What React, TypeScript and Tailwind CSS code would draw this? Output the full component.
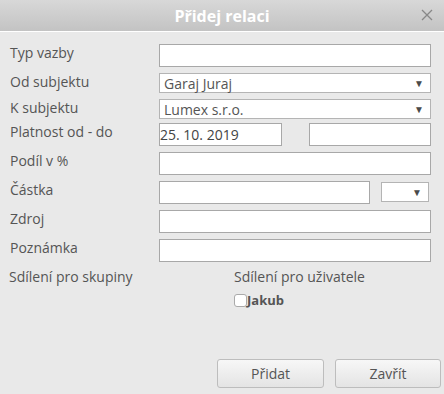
import React from 'react';

const Arrow: React.FC = () => (
    <span className="absolute right-[6px] top-1/2 -translate-y-1/2 text-[10px] leading-none text-[#4a4a4a]">▼</span>
);

const TextInput: React.FC<{ className?: string; value?: string }> = ({ className = '', value = '' }) => (
    <input
        type="text"
        defaultValue={value}
        className={`h-[23px] bg-white border border-[#a8a8a8] outline-none px-0 text-[14px] text-[#444] ${className}`}
    />
);

const Select: React.FC<{ value?: string; className?: string }> = ({ value = '', className = '' }) => (
    <div className={`relative h-[20px] bg-white border border-[#b4b4b4] flex items-center pl-[4px] text-[14px] text-[#555] ${className}`}>
        <span>{value}</span>
        <Arrow />
    </div>
);

const Row: React.FC<{ label: string; h: string; children: React.ReactNode }> = ({ label, h, children }) => (
    <div className={`flex items-start ${h}`}>
        <div className="w-[159px] pl-[10px] leading-[18px]">{label}</div>
        <div className="flex-1 flex items-start">{children}</div>
    </div>
);

const App: React.FC = () => {
    return (
        <div className="w-[444px] h-[394px] bg-[#e9e9e9] flex flex-col text-[14px] text-[#555]" style={{ fontFamily: '"Open Sans", sans-serif' }}>
            {/* header */}
            <div className="relative h-[32px] bg-gradient-to-b from-[#d8d8d8] to-[#c3c3c3] border-b border-white flex items-center justify-center">
                <span className="text-white font-bold text-[16px]">Přidej relaci</span>
                <svg className="absolute right-[11px] top-[9px]" width="12" height="12" viewBox="0 0 12 12">
                    <path d="M1 1L11 11M11 1L1 11" stroke="#888" strokeWidth="1.3" />
                </svg>
            </div>

            {/* form */}
            <div className="flex flex-col pt-[12px]">
                <Row label="Typ vazby" h="h-[29px]">
                    <TextInput className="w-[272px]" />
                </Row>
                <Row label="Od subjektu" h="h-[26px]">
                    <Select value="Garaj Juraj" className="w-[272px]" />
                </Row>
                <Row label="K subjektu" h="h-[24px]">
                    <Select value="Lumex s.r.o." className="w-[272px]" />
                </Row>
                <Row label="Platnost od - do" h="h-[29px]">
                    <TextInput value="25. 10. 2019" className="w-[123px]" />
                    <TextInput className="w-[122px] ml-[27px]" />
                </Row>
                <Row label="Podíl v %" h="h-[29px]">
                    <TextInput className="w-[272px]" />
                </Row>
                <Row label="Částka" h="h-[29px]">
                    <TextInput className="w-[211px]" />
                    <Select className="w-[48px] ml-[11px] mt-[1px]" />
                </Row>
                <Row label="Zdroj" h="h-[29px]">
                    <TextInput className="w-[272px]" />
                </Row>
                <Row label="Poznámka" h="h-[29px]">
                    <TextInput className="w-[272px]" />
                </Row>

                {/* sharing */}
                <div className="flex mt-[-1px]">
                    <div className="w-[234px] pl-[9px] leading-[20px]">Sdílení pro skupiny</div>
                    <div className="flex flex-col">
                        <span className="leading-[20px]">Sdílení pro uživatele</span>
                        <label className="flex items-center mt-[4px]">
                            <span className="w-[13px] h-[13px] border border-[#aaa] rounded-[3px] bg-white" />
                            <span className="font-bold text-[13px] text-[#555] leading-[18px]">Jakub</span>
                        </label>
                    </div>
                </div>
            </div>

            {/* buttons */}
            <div className="mt-auto flex justify-end gap-[11px] pr-[3px] pb-[6px]">
                <button className="w-[107px] h-[29px] rounded-[3px] border border-[#bdbdbd] bg-gradient-to-b from-[#f7f7f7] to-[#e4e4e4] text-[14px] text-[#555]">
                    Přidat
                </button>
                <button className="w-[106px] h-[29px] rounded-[3px] border border-[#bdbdbd] bg-gradient-to-b from-[#f7f7f7] to-[#e4e4e4] text-[14px] text-[#555]">
                    Zavřít
                </button>
            </div>
        </div>
    );
};

export default App;
